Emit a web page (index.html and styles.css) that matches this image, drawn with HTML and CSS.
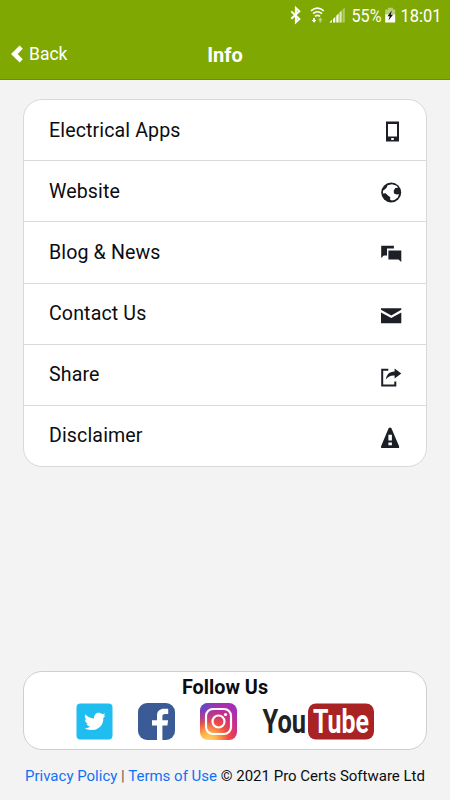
FILE: index.html
```html
<!DOCTYPE html>
<html lang="en">
<head>
	<meta charset="UTF-8">
	<meta name="viewport" content="width=device-width, initial-scale=1.0">
	<title>Info</title>
	<link rel="stylesheet" href="styles.css">
</head>
<body>

	<header class="header">
		<!-- Bluetooth, wifi, signal, battery, clock -->
		<svg class="status-bar" viewBox="0 0 450 32" fill="#fff">
			<path d="M291.3 11.4l8 7.6-3.4 3.2V8l3.4 3.2-8 7.6" fill="none" stroke="#fff" stroke-width="2"/>
			<g fill="none" stroke="#fff" stroke-width="1.6">
				<path d="M311 10.8q6.4-5.2 12.8 0"/>
				<path d="M313 13.6q4.5-3.6 9 0"/>
				<path d="M315 16.4q2.5-2 5 0"/>
			</g>
			<path d="M313.2 18h1.7v2h1.5l-2.3 2.7-2.4-2.7h1.5z"/>
			<path d="M319.5 22.5v-2.3H318l2.3-2.7 2.4 2.7h-1.5v2.3z" opacity=".5"/>
			<path d="M329.3 22.4l2.7-2.6v2.6zM333 19l2.3-2.2v5.6H333zM336.3 15.8l2.3-2.2v8.8h-2.3z"/>
			<path d="M339.4 12.6l2.3-2.2v12h-2.3z" opacity=".75"/>
			<path d="M342.5 9.6l2.3-2.2v15h-2.3z" opacity=".4"/>
			<text class="status-text" x="351.5" y="22.3" textLength="30" lengthAdjust="spacingAndGlyphs">55%</text>
			<path d="M388 7.8h5v1.7h2.2v6h-10v-6h2.8z" opacity=".45"/>
			<path d="M385.2 14.5h10v8h-10z"/>
			<path d="M391.8 10.5l-4.3 5.7h2.2l-1.2 4.4 4.5-5.8h-2.3z" fill="#111"/>
			<text class="status-text" x="400.5" y="22.3" textLength="41" lengthAdjust="spacingAndGlyphs">18:01</text>
		</svg>
		<div class="title-bar">
			<a class="back" href="#">
				<svg class="back-icon" viewBox="0 0 12 18"><path d="M10.2 2.2L3.3 9l6.9 6.8" fill="none" stroke="#fff" stroke-width="4.6"/></svg>
				<span>Back</span>
			</a>
			<h1 class="title">Info</h1>
		</div>
	</header>

	<main class="content">
		<ul class="menu">
			<li class="menu-item">
				<span>Electrical Apps</span>
				<svg class="icon" viewBox="0 0 22 22"><path fill-rule="evenodd" d="M6 .5h13v20H6zM8 2.9v12.7h9V2.9zM11.2 17v2h2.6v-2z"/></svg>
			</li>
			<li class="menu-item">
				<span>Website</span>
				<svg class="icon" viewBox="0 0 22 22">
					<circle cx="11.2" cy="10.5" r="10"/>
					<path fill="#fff" d="M7.6 3.2l4.4-1 4.6 1.6 1.5 2-2.8.3-1.6 2.6.3 2.7 2.6 1.2 2.4-.3-1.2 3.2-3.4 2.4-2.6.6-1.8-.9.3-2.4-2.3-1.8-2.4-2.2-2.7.2.1-2.7 2.6-1.9 1.4-1.8z"/>
				</svg>
			</li>
			<li class="menu-item">
				<span>Blog &amp; News</span>
				<svg class="icon" viewBox="0 0 22 22"><path d="M1.2 2.7h12.7v2.8H7v7.1H3.8l-2.6 2.5zM8.4 7.4h12.9v11.7l-2.8-2.6H8.4z"/></svg>
			</li>
			<li class="menu-item">
				<span>Contact Us</span>
				<svg class="icon" viewBox="0 0 22 22"><path d="M1 3.2h20.3v1.6l-10 5.6L1 4.8zM1 7.5l10.3 5.6 10-5.6v10.8H1z"/></svg>
			</li>
			<li class="menu-item">
				<span>Share</span>
				<svg class="icon" viewBox="0 0 22 22">
					<path d="M8.3 3.8H2.2v15.8h13.1v-4" fill="none" stroke="#1c2026" stroke-width="2"/>
					<path d="M14.6 2.5l6.7 5.1-6.7 4.8V9.6c-4-.2-6.4 1-8.7 3.9.4-4.7 3.4-8 8.7-8.1z"/>
				</svg>
			</li>
			<li class="menu-item">
				<span>Disclaimer</span>
				<svg class="icon" viewBox="0 0 22 22"><path fill-rule="evenodd" d="M8.7 1q1.5-1 2.6 0l7.8 18.3v1.6H1.1v-1.6zM8.4 7.8v5.6h3.5V7.8zM8.4 15.4v2.8h3.5v-2.8z"/></svg>
			</li>
		</ul>

		<section class="follow">
			<h2 class="follow-title">Follow Us</h2>
			<div class="social">
				<svg class="social-icon" viewBox="0 0 37 37">
					<rect x=".5" y=".5" width="36" height="36" rx="4" fill="#20bdf0"/>
					<path fill="#fff" d="M9.3 11.2c2.4 2.7 5 3.9 8.9 4.2-.7-5.5 5.1-7.2 8-4.1l2.9-1.1-1.4 2.5 1.8-.2-2.2 2.4c.5 7.9-6.1 12.6-12.8 12.2-2.3-.1-4.2-.8-6-2 2.3.2 4.2-.3 5.6-1.6-1.8-.3-3.1-1.3-3.7-2.8h1.6c-1.7-.8-3-2.2-3-4.3l1.7.5c-1.9-1.7-2.3-3.8-1.4-5.7z"/>
				</svg>
				<svg class="social-icon" viewBox="0 0 37 37">
					<rect width="37" height="37" rx="9" fill="#3a5b96"/>
					<path fill="#fff" d="M19 37V22.6h-5v-5.4h5v-4.4c0-5 3-7 7-7h4.2v5.3h-3c-2.2 0-2.8 1-2.8 2.7v3.4h5.7l-.7 5.4h-5V37z"/>
				</svg>
				<svg class="social-icon" viewBox="0 0 37 37">
					<defs>
						<radialGradient id="insta-warm" cx=".23" cy="1.05" r="1.1">
							<stop offset="0" stop-color="#ffdc70"/>
							<stop offset=".22" stop-color="#ffb34b"/>
							<stop offset=".5" stop-color="#f04c42"/>
							<stop offset=".78" stop-color="#cc2a8c"/>
							<stop offset="1" stop-color="#a42eb5"/>
						</radialGradient>
						<radialGradient id="insta-blue" cx="0" cy="0" r=".65">
							<stop offset="0" stop-color="#3f55d5"/>
							<stop offset="1" stop-color="#863bc4" stop-opacity="0"/>
						</radialGradient>
					</defs>
					<rect width="37" height="37" rx="8" fill="url(#insta-warm)"/>
					<rect width="37" height="37" rx="8" fill="url(#insta-blue)"/>
					<g fill="none" stroke="#fff" stroke-width="2.2">
						<rect x="6" y="6" width="25" height="25" rx="7"/>
						<circle cx="18.5" cy="18.5" r="6"/>
					</g>
					<circle cx="25.5" cy="11.5" r="1.6" fill="#fff"/>
				</svg>
				<svg class="youtube" viewBox="0 0 113 37">
					<rect x="46" y=".5" width="66" height="36" rx="8" fill="#a92324"/>
					<text class="youtube-text" transform="translate(.5 30.3) scale(.77 1)" fill="#222">You</text>
					<text class="youtube-text" transform="translate(51 30.3) scale(.755 1)" fill="#fff">Tube</text>
				</svg>
			</div>
		</section>

		<footer class="footer"><a href="#">Privacy Policy</a> <span class="divider">|</span> <a href="#">Terms of Use</a> © 2021 Pro Certs Software Ltd</footer>
	</main>

</body>
</html>
```

FILE: styles.css
```css
* {
	box-sizing: border-box;
}

body {
	margin: 0;
	height: 800px;
	display: flex;
	flex-direction: column;
	font-family: Roboto, sans-serif;
	background-color: #f3f3f3;
	color: #0b0d10;
	overflow: hidden;
}

a {
	text-decoration: none;
}

.header {
	height: 80px;
	background-color: #7fa902;
	border-bottom: 1px solid #6c9000;
	color: #fff;
}

.status-bar {
	display: block;
	width: 450px;
	height: 32px;
}

.status-text {
	font-size: 19px;
}

.title-bar {
	display: grid;
	grid-template-columns: 1fr auto 1fr;
	align-items: center;
	height: 46px;
}

.back {
	display: flex;
	align-items: center;
	gap: 6px;
	padding: 0 0 2px 11px;
	color: #fff;
	font-size: 17.5px;
}

.back-icon {
	width: 12px;
	height: 18px;
	margin-top: -1px;
}

.title {
	margin: 0;
	font-size: 20px;
	font-weight: 700;
}

.content {
	flex: 1;
	display: flex;
	flex-direction: column;
	padding: 19px 23px 0;
}

.menu {
	margin: 0;
	padding: 0;
	list-style: none;
	height: 368px;
	display: flex;
	flex-direction: column;
	background-color: #fff;
	border: 1px solid #d9d9d9;
	border-radius: 19px;
}

.menu-item {
	flex: 1;
	display: flex;
	justify-content: space-between;
	align-items: center;
	padding: 0 24px 0 25px;
	font-size: 19.6px;
	letter-spacing: 0.12px;
}

.menu-item + .menu-item {
	border-top: 1px solid #d9d9d9;
}

.icon {
	width: 22px;
	height: 22px;
	margin-top: 4px;
	fill: #1c2026;
}

.follow {
	height: 79px;
	margin-top: 204px;
	background-color: #fff;
	border: 1px solid #cfcfcf;
	border-radius: 19px;
}

.follow-title {
	margin: 4px 0 3px;
	font-size: 19.8px;
	line-height: 24px;
	font-weight: 700;
	text-align: center;
}

.social {
	display: flex;
	justify-content: center;
	gap: 25px;
}

.social-icon {
	width: 37px;
	height: 37px;
}

.youtube {
	width: 113px;
	height: 37px;
	overflow: visible;
}

.youtube-text {
	font-size: 33px;
	font-weight: 700;
}

.footer {
	margin: 17px -23px 0;
	font-size: 15px;
	line-height: 18px;
	text-align: center;
	white-space: nowrap;
}

.footer a {
	color: #1071f5;
}

.divider {
	color: #555;
}
```
